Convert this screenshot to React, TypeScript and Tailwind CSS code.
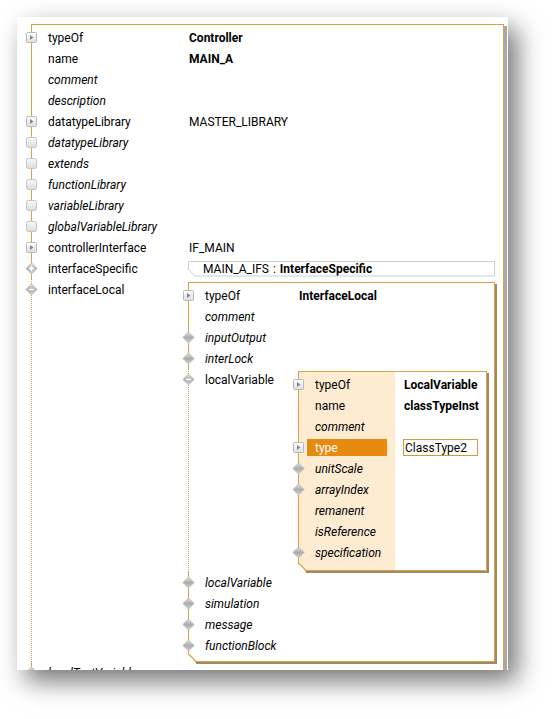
import type { ReactNode } from "react";

type IconKind = "expand" | "empty" | "diamond" | "plus" | "minus";

const ExpandIcon = () => (
  <svg className="shrink-0" width="11" height="11" viewBox="0 0 11 11">
    <defs>
      <linearGradient id="expandFill" x1="0" y1="0" x2="0" y2="1">
        <stop offset="0" stopColor="#fefefe" />
        <stop offset="1" stopColor="#dedede" />
      </linearGradient>
    </defs>
    <rect x="0.5" y="0.5" width="10" height="10" rx="1" fill="url(#expandFill)" stroke="#b8b8b8" />
    <path d="M4 3 L7.5 5.5 L4 8 Z" fill="#858585" />
  </svg>
);

const EmptyIcon = () => (
  <svg className="shrink-0" width="11" height="11" viewBox="0 0 11 11">
    <defs>
      <linearGradient id="emptyFill" x1="0" y1="0" x2="0" y2="1">
        <stop offset="0" stopColor="#f8f8f8" />
        <stop offset="1" stopColor="#dcdcdc" />
      </linearGradient>
    </defs>
    <rect x="0.5" y="0.5" width="10" height="10" rx="2" fill="url(#emptyFill)" stroke="#c4c4c4" />
  </svg>
);

const Diamond = ({ sign }: { sign?: "plus" | "minus" }) => (
  <svg className="shrink-0" width="13" height="13" viewBox="0 0 14 14">
    <defs>
      <linearGradient id="diamondFill" x1="0" y1="0" x2="0" y2="1">
        <stop offset="0" stopColor="#e4e4e4" />
        <stop offset="0.5" stopColor="#ababab" />
        <stop offset="1" stopColor="#d2d2d2" />
      </linearGradient>
    </defs>
    <path
      d="M7 1 L13 7 L7 13 L1 7 Z"
      fill="url(#diamondFill)"
      stroke="#c0c0c0"
      strokeWidth="1"
      strokeLinejoin="round"
    />
    {sign && <path d="M4 7 H10" stroke="#fff" strokeWidth="1.7" />}
    {sign === "plus" && <path d="M7 4 V10" stroke="#fff" strokeWidth="1.7" />}
  </svg>
);

function TreeIcon({ kind }: { kind?: IconKind }) {
  if (kind === "expand") return <ExpandIcon />;
  if (kind === "empty") return <EmptyIcon />;
  if (kind === "diamond") return <Diamond />;
  if (kind === "plus") return <Diamond sign="plus" />;
  if (kind === "minus") return <Diamond sign="minus" />;
  return null;
}

// cut corner at the bottom left of a frame, drawn over the frame edge
const Chamfer = () => (
  <svg className="absolute bottom-[-3px] left-0" width="10" height="10" viewBox="0 0 10 10">
    <polygon points="0,0.6 8,8.6 8,10 0,10" fill="#fff" />
    <line x1="0.5" y1="0" x2="8" y2="7.5" stroke="#d9a13f" strokeWidth="1.2" />
  </svg>
);

function Frame({ className, children }: { className: string; children: ReactNode }) {
  return (
    <div
      className={`relative border-t border-r border-b border-[#d9a13f] shadow-[2px_2px_0_#9d8a68] ${className}`}
    >
      <div className="h-[2px] border-l border-[#d9a13f]" />
      {children}
      <div className="h-[5px] border-l border-[#d9a13f]" />
      <Chamfer />
    </div>
  );
}

interface ItemProps {
  icon?: IconKind;
  label: string;
  italic?: boolean;
  labelClass: string;
  dotted?: boolean;
  children?: ReactNode;
}

function Item({ icon, label, italic, labelClass, dotted, children }: ItemProps) {
  return (
    <div className={`flex border-l border-[#d9a13f] ${dotted ? "border-dotted" : "border-solid"}`}>
      <div className="-ml-[6px] flex h-[21px] w-[11px] shrink-0 items-center justify-center">
        <TreeIcon kind={icon} />
      </div>
      <div className={`ml-[11px] flex h-[21px] shrink-0 items-center ${labelClass} ${italic ? "italic" : ""}`}>
        {label}
      </div>
      <div className="min-w-0 flex-1">{children}</div>
    </div>
  );
}

const Value = ({ children, bold }: { children: ReactNode; bold?: boolean }) => (
  <div className={`flex h-[21px] items-center pl-px ${bold ? "font-bold" : ""}`}>{children}</div>
);

interface NestedRowProps {
  icon?: IconKind;
  label: string;
  italic?: boolean;
  selected?: boolean;
  children?: ReactNode;
}

function NestedRow({ icon, label, italic, selected, children }: NestedRowProps) {
  return (
    <div className="flex h-[21px] items-center border-l border-[#d9a13f]">
      <div className="-ml-[6px] flex w-[11px] shrink-0 justify-center">
        <TreeIcon kind={icon} />
      </div>
      <div
        className={`ml-[3px] flex h-[17px] w-[80px] shrink-0 items-center pl-[8px] ${
          selected ? "bg-[#e8890f] text-white" : ""
        } ${italic ? "italic" : ""}`}
      >
        {label}
      </div>
      <div className="ml-[8px] flex h-[21px] w-[91px] items-center pl-[8px]">{children}</div>
    </div>
  );
}

const OUTER = "w-[140px]";
const MID = "w-[93px]";

export default function App() {
  return (
    <div className="h-[719px] w-full bg-white pl-[17px] pt-[17px] font-['Roboto',sans-serif] text-[12px] leading-none text-black">
      <div className="h-[653px] w-[491px] overflow-hidden bg-white shadow-[9px_11px_24px_rgba(0,0,0,0.55)]">
        <div className="ml-[14px] mt-[7px] w-[473px] border-t border-r border-[#d9a13f] shadow-[3px_2px_0_#a8a8a8]">
          <div className="h-[2px] border-l border-[#d9a13f]" />
          <Item icon="expand" label="typeOf" labelClass={OUTER}>
            <Value bold>Controller</Value>
          </Item>
          <Item label="name" labelClass={OUTER}>
            <Value bold>MAIN_A</Value>
          </Item>
          <Item label="comment" italic labelClass={OUTER} />
          <Item label="description" italic labelClass={OUTER} />
          <Item icon="expand" label="datatypeLibrary" labelClass={OUTER}>
            <Value>MASTER_LIBRARY</Value>
          </Item>
          <Item icon="empty" label="datatypeLibrary" italic labelClass={OUTER} />
          <Item icon="empty" label="extends" italic labelClass={OUTER} />
          <Item icon="empty" label="functionLibrary" italic labelClass={OUTER} />
          <Item icon="empty" label="variableLibrary" italic labelClass={OUTER} />
          <Item icon="empty" label="globalVariableLibrary" italic labelClass={OUTER} />
          <Item icon="expand" label="controllerInterface" labelClass={OUTER}>
            <Value>IF_MAIN</Value>
          </Item>
          <Item icon="plus" label="interfaceSpecific" labelClass={OUTER}>
            <div className="flex h-[21px] items-center">
              <div className="h-[16px] w-[307px] bg-[#cfcfcf] p-px [clip-path:polygon(0_0,100%_0,100%_100%,7px_100%,0_calc(100%_-_7px))]">
                <div className="flex h-full items-center bg-white pl-[14px] [clip-path:polygon(0_0,100%_0,100%_100%,6px_100%,0_calc(100%_-_6px))]">
                  MAIN_A_IFS
                  <span className="mx-[4px]">:</span>
                  <span className="font-bold">InterfaceSpecific</span>
                </div>
              </div>
            </div>
          </Item>
          <Item icon="minus" label="interfaceLocal" labelClass={OUTER} dotted>
            <Frame className="mt-[3px] w-[307px] bg-white">
              <Item icon="expand" label="typeOf" labelClass={MID}>
                <Value bold>InterfaceLocal</Value>
              </Item>
              <Item label="comment" italic labelClass={MID} />
              <Item icon="diamond" label="inputOutput" italic labelClass={MID} />
              <Item icon="diamond" label="interLock" italic labelClass={MID} />
              <Item icon="minus" label="localVariable" labelClass={MID} dotted>
                <Frame className="mb-[1px] mt-[2px] w-[189px] bg-[linear-gradient(to_right,#fdebd2_97px,#ffffff_97px)]">
                  <NestedRow icon="expand" label="typeOf">
                    <span className="pl-px font-bold">LocalVariable</span>
                  </NestedRow>
                  <NestedRow label="name">
                    <span className="pl-px font-bold">classTypeInst</span>
                  </NestedRow>
                  <NestedRow label="comment" italic />
                  <NestedRow icon="expand" label="type" selected>
                    <div className="flex h-[17px] w-[75px] items-center border border-[#d29a3c] bg-white pl-px">
                      ClassType2
                    </div>
                  </NestedRow>
                  <NestedRow icon="diamond" label="unitScale" italic />
                  <NestedRow icon="diamond" label="arrayIndex" italic />
                  <NestedRow label="remanent" italic />
                  <NestedRow label="isReference" italic />
                  <NestedRow icon="diamond" label="specification" italic />
                  <div className="h-[2px] border-l border-[#d9a13f]" />
                </Frame>
              </Item>
              <Item icon="diamond" label="localVariable" italic labelClass={MID} />
              <Item icon="diamond" label="simulation" italic labelClass={MID} />
              <Item icon="diamond" label="message" italic labelClass={MID} />
              <Item icon="diamond" label="functionBlock" italic labelClass={MID} />
            </Frame>
          </Item>
          <Item icon="diamond" label="localTextVariable" italic labelClass={OUTER} />
        </div>
      </div>
    </div>
  );
}
